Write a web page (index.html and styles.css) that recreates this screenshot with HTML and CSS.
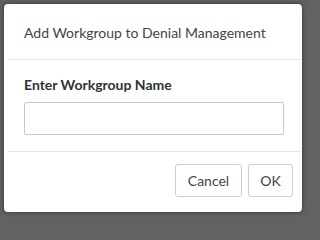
FILE: index.html
```html
<!DOCTYPE html>
<html>
<head>
<meta charset="utf-8">
<link rel="stylesheet" href="styles.css">
</head>
<body>
<div class="dialog">
  <div class="header">
    <div class="title">Add Workgroup to Denial Management</div>
  </div>
  <div class="body">
    <label class="label" for="wg">Enter Workgroup Name</label>
    <input class="input" id="wg" type="text">
  </div>
  <div class="footer">
    <button class="btn btn-cancel">Cancel</button>
    <button class="btn btn-ok">OK</button>
  </div>
</div>
</body>
</html>
```
FILE: styles.css
```css
html {
  background: #626262;
}
html, body {
  margin: 0;
  padding: 0;
}
body {
  width: 308px;
  height: 218px;
  background: #626262;
  box-sizing: border-box;
  padding: 4px 6px 6px 4px;
  font-family: Lato, "Open Sans", sans-serif;
  color: #444;
  overflow: hidden;
}
.dialog {
  background: #fff;
  width: 298px;
  height: 208px;
  border-radius: 4px;
  box-shadow: 0 0 5px rgba(0, 0, 0, 0.5);
  display: flex;
  flex-direction: column;
}
.header {
  margin: 0 2px 0 4px;
  padding: 19px 0 16px 16px;
  border-bottom: 1px solid #e3e3e3;
}
.title {
  font-size: 14px;
  line-height: 20px;
  color: #444;
}
.body {
  margin: 0 2px 0 4px;
  padding: 16px 16px 16px 16px;
  border-bottom: 1px solid #e3e3e3;
  display: flex;
  flex-direction: column;
}
.label {
  font-size: 14px;
  line-height: 18px;
  font-weight: 700;
  color: #333;
  margin-bottom: 8px;
}
.input {
  box-sizing: border-box;
  width: 260px;
  height: 33px;
  border: 1px solid #c8c8c8;
  border-radius: 2px;
  margin: 0;
  padding: 0 8px;
  font-family: inherit;
  font-size: 14px;
}
.footer {
  display: flex;
  justify-content: flex-end;
  gap: 6px;
  padding: 12px 9px 0 0;
}
.btn {
  box-sizing: border-box;
  height: 33px;
  background: #fff;
  border: 1px solid #cdcdcd;
  border-radius: 3px;
  font-family: inherit;
  font-size: 14px;
  color: #444;
  padding: 0;
}
.btn-cancel {
  width: 67px;
}
.btn-ok {
  width: 45px;
}
```
